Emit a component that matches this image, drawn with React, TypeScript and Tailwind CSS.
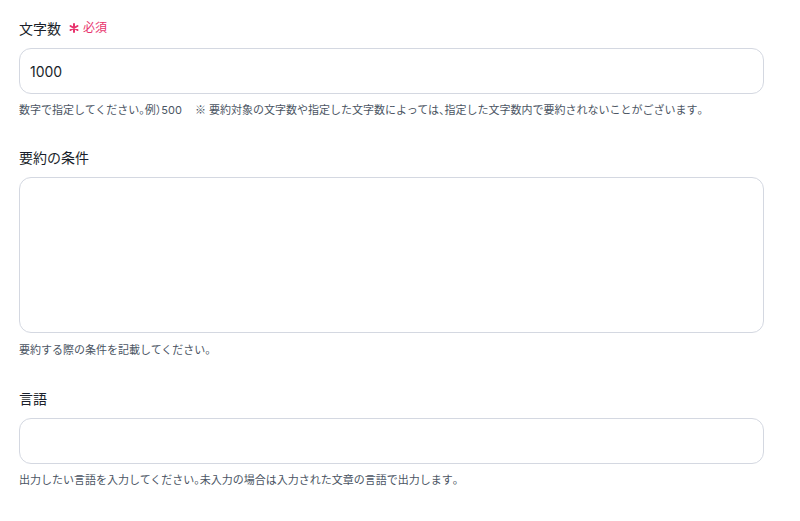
const H = ({ children }: { children: string }) => (
  <span className="[font-feature-settings:'halt']">{children}</span>
)

export default function App() {
  return (
    <div
      className="w-[800px] h-[521px] bg-white px-[19px] text-[#1a1f2b]"
      style={{ fontFamily: 'Inter, "Noto Sans CJK JP", sans-serif' }}
    >
      {/* 文字数 */}
      <div className="pt-[18px]">
        <div className="flex items-center gap-[8px] h-[20px]">
          <span className="text-[14px]">文字数</span>
          <span className="flex items-center gap-[4px] text-[12px] text-[#e8336d]">
            <svg width="10" height="10" viewBox="0 0 10 10" fill="none" stroke="currentColor" strokeWidth="2" strokeLinecap="round">
              <path d="M5 1v8M1.5 3l7 4M8.5 3l-7 4" />
            </svg>
            必須
          </span>
        </div>
        <div className="mt-[10px] w-[745px] h-[46px] rounded-[12px] border border-[#d4d8e1] flex items-center px-[10px] text-[14px]">
          1000
        </div>
        <p className="mt-[8px] text-[11px] text-[#4b5563] leading-[14px] whitespace-pre">
          数字で指定してください<H>。</H>例<H>）</H>500
          <span className="ml-[13px]" style={{ fontFamily: '"Noto Sans CJK JP", sans-serif' }}>※</span>
          {' '}要約対象の文字数や指定した文字数によっては<H>、</H>指定した文字数内で要約されないことがございます<H>。</H>
        </p>
      </div>

      {/* 要約の条件 */}
      <div className="pt-[30px]">
        <div className="h-[20px] flex items-center text-[14px]">要約の条件</div>
        <div className="mt-[10px] w-[745px] h-[156px] rounded-[12px] border border-[#d4d8e1]" />
        <p className="mt-[10px] text-[11px] text-[#4b5563] leading-[14px]">
          要約する際の条件を記載してください<H>。</H>
        </p>
      </div>

      {/* 言語 */}
      <div className="pt-[31px]">
        <div className="h-[20px] flex items-center text-[14px]">言語</div>
        <div className="mt-[10px] w-[745px] h-[46px] rounded-[12px] border border-[#d4d8e1]" />
        <p className="mt-[9px] text-[11px] text-[#4b5563] leading-[14px]">
          出力したい言語を入力してください<H>。</H>未入力の場合は入力された文章の言語で出力します<H>。</H>
        </p>
      </div>
    </div>
  )
}
